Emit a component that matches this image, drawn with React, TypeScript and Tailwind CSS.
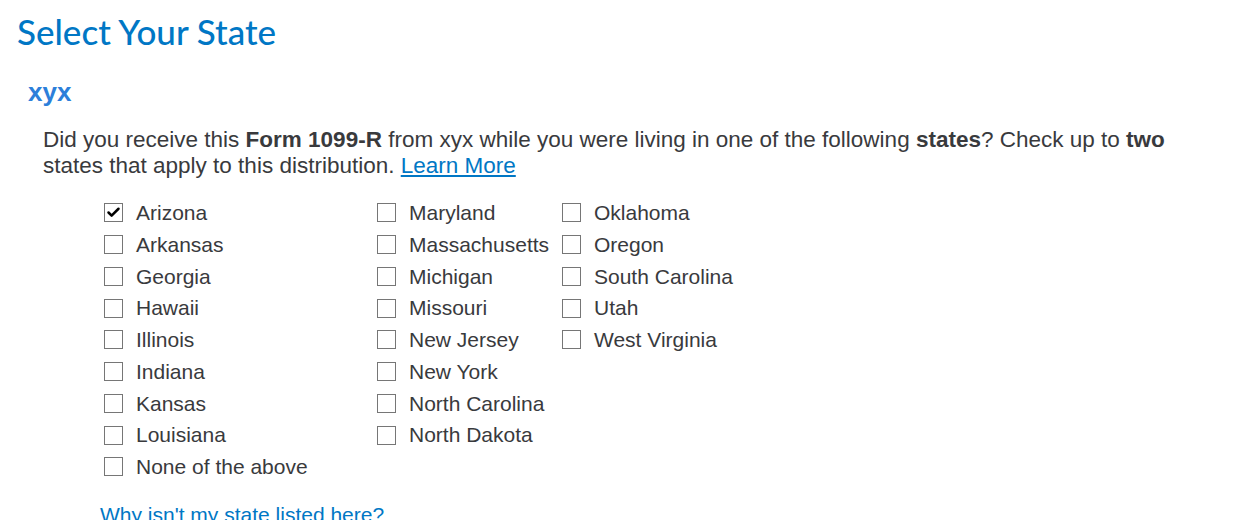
import { Check } from "lucide-react";

const columns: string[][] = [
  ["Arizona", "Arkansas", "Georgia", "Hawaii", "Illinois", "Indiana", "Kansas", "Louisiana", "None of the above"],
  ["Maryland", "Massachusetts", "Michigan", "Missouri", "New Jersey", "New York", "North Carolina", "North Dakota"],
  ["Oklahoma", "Oregon", "South Carolina", "Utah", "West Virginia"],
];

const colWidths = ["w-[273px]", "w-[185px]", "w-[200px]"];

const StateBox = ({ label, checked }: { label: string; checked?: boolean }) => (
  <label className="flex items-center h-[31.75px] cursor-pointer">
    <span className="w-[19px] h-[19px] border border-[#767676] bg-white flex items-center justify-center shrink-0">
      {checked && <Check className="w-[15px] h-[15px] text-black" strokeWidth={4} />}
    </span>
    <span className="ml-[13px] whitespace-nowrap">{label}</span>
  </label>
);

export default function App() {
  return (
    <div className="bg-white h-[520px] overflow-hidden text-[#393a3d] font-[Liberation_Sans,Arial,sans-serif]">
      <div className="pl-[17px] pt-[8px]">
        <h1 className="font-[Lato,sans-serif] text-[35px] leading-[46px] font-medium text-[#0077c5]">
          Select Your State
        </h1>
        <h2 className="mt-[23px] ml-[11px] text-[26px] leading-[30px] font-bold text-[#2c7fda]">xyx</h2>
        <p className="mt-[20px] ml-[26px] w-[1150px] text-[22.5px] leading-[26px]">
          Did you receive this <b>Form 1099-R</b> from xyx while you were living in one of the following{" "}
          <b>states</b>? Check up to <b>two</b> states that apply to this distribution.{" "}
          <a href="#" className="text-[#0077c5] underline">
            Learn More
          </a>
        </p>

        <div className="mt-[18px] ml-[87px] flex text-[21px]">
          {columns.map((col, i) => (
            <div key={i} className={colWidths[i]}>
              {col.map((s) => (
                <StateBox key={s} label={s} checked={s === "Arizona"} />
              ))}
            </div>
          ))}
        </div>

        <a href="#" className="block mt-[19px] ml-[83px] text-[21px] leading-[26px] text-[#0077c5]">
          Why isn't my state listed here?
        </a>
      </div>
    </div>
  );
}
